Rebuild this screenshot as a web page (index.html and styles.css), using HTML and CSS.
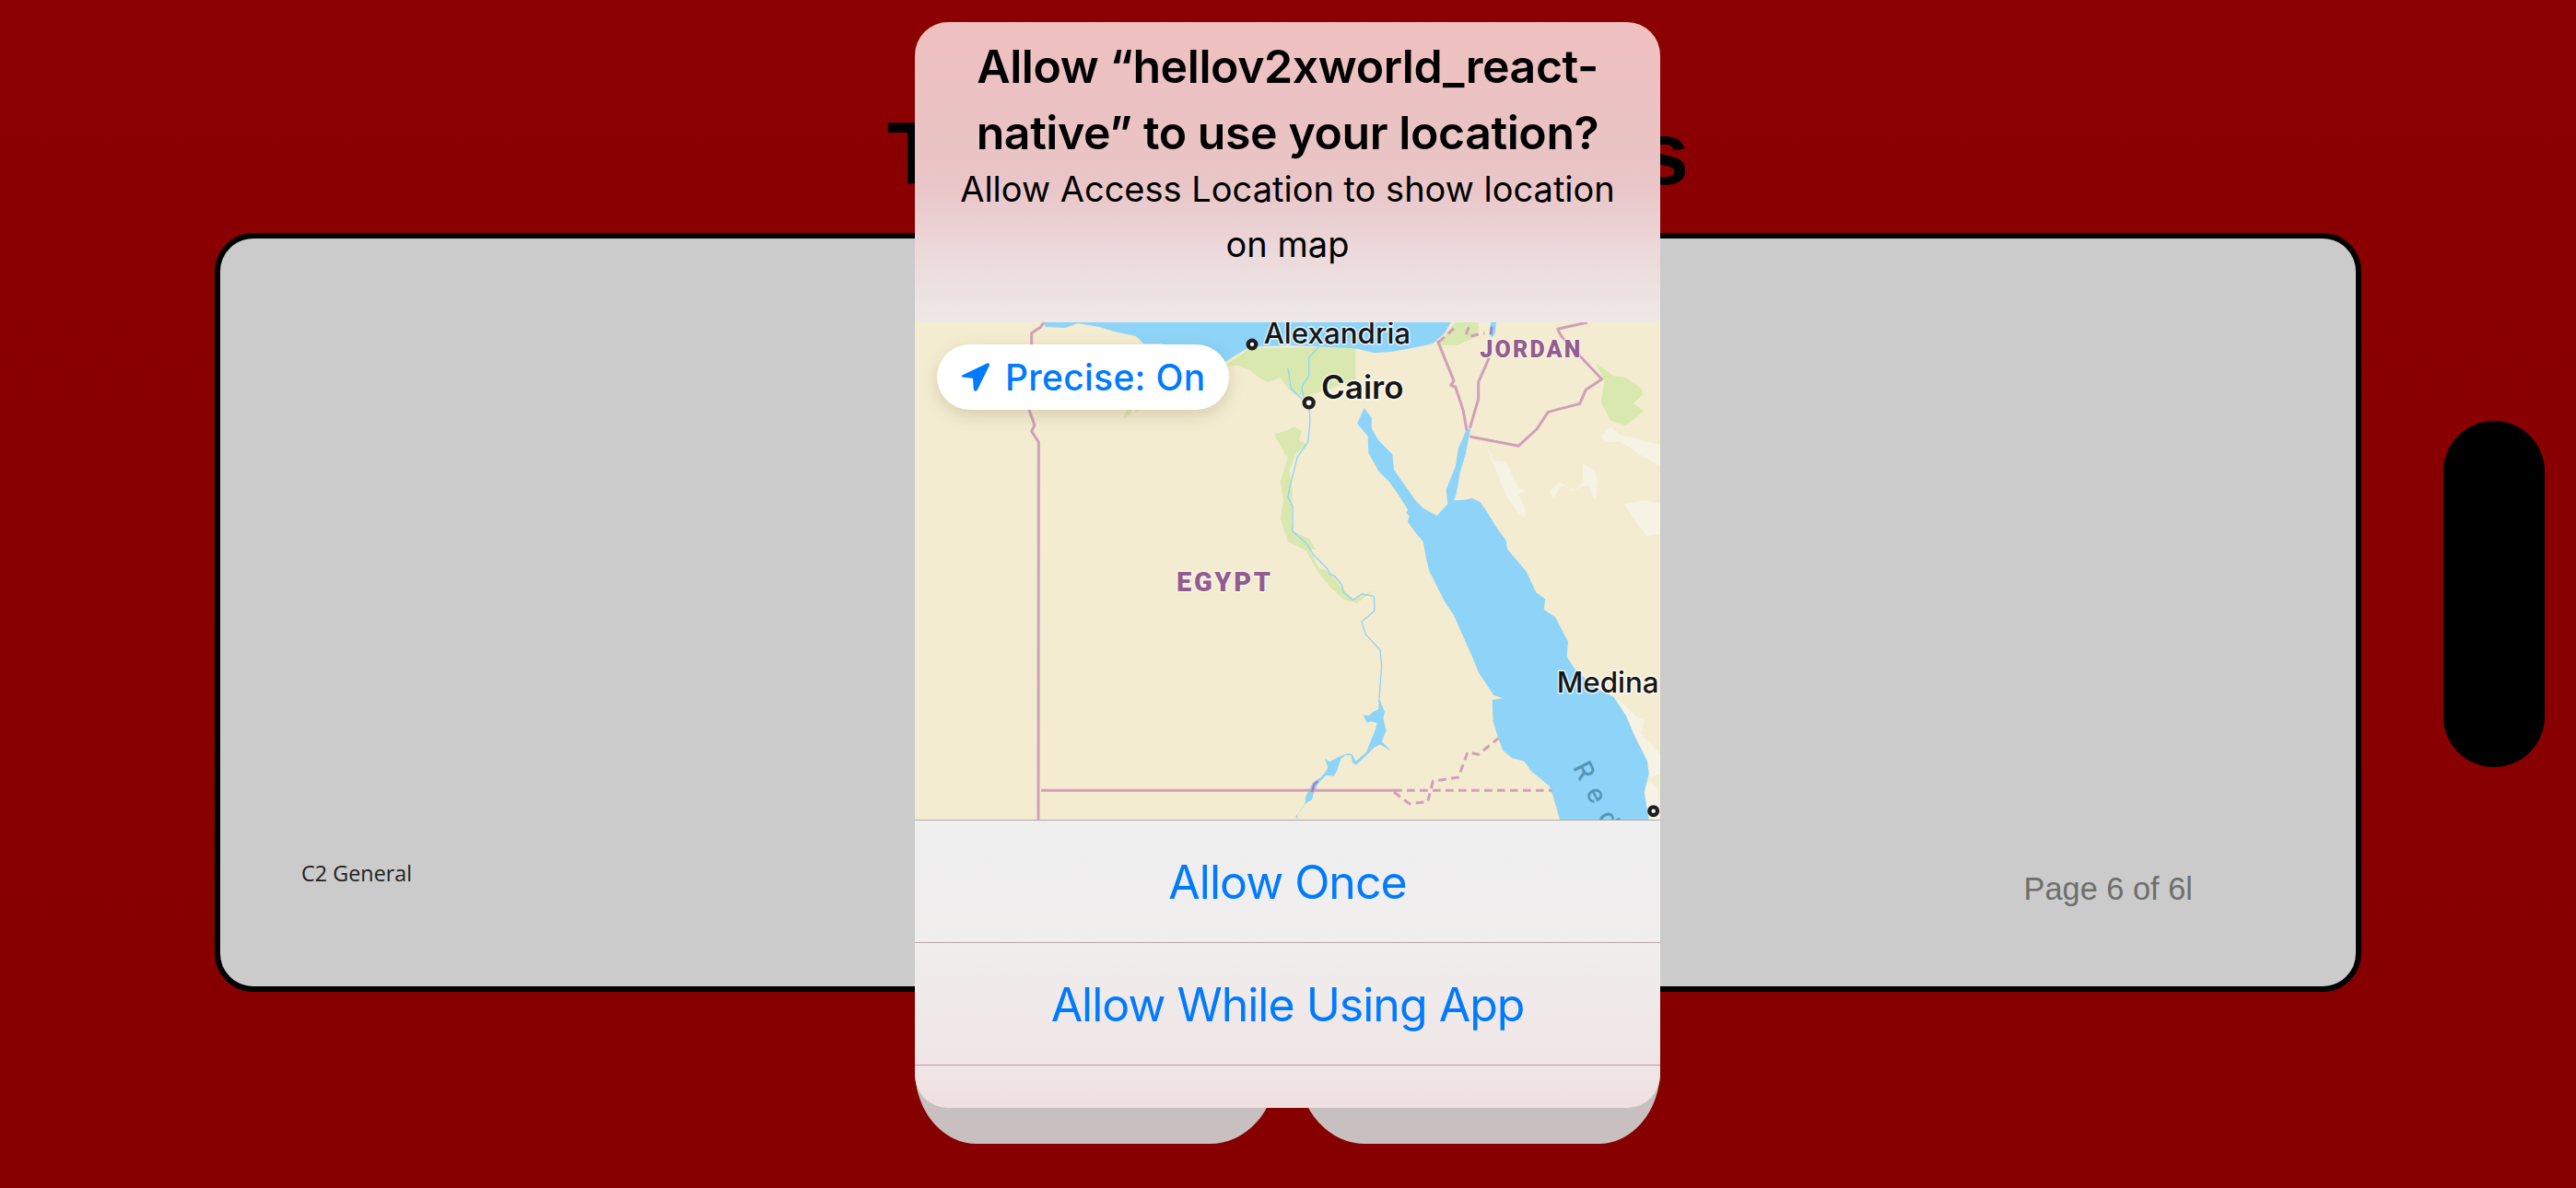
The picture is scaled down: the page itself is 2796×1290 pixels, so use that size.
FILE: index.html
```html
<!DOCTYPE html>
<html lang="en">
<head>
<meta charset="utf-8">
<title>Tracking Locations</title>
<link rel="stylesheet" href="styles.css">
</head>
<body>
<main class="page">
  <h1 class="heading">Tracking Locations</h1>
  <section class="card">
    <div class="card-foot">
      <span class="classification">C2 General</span>
      <span class="page-number">Page 6 of 6l</span>
    </div>
  </section>
</main>
<div class="side-pill"></div>

<div class="alert">
  <div class="alert-back"><span class="back-btn back-left"></span><span class="back-btn back-right"></span></div>
  <div class="alert-panel">
    <header class="alert-head">
      <h2 class="alert-title">Allow “hellov2xworld_react-native” to use your location?</h2>
      <p class="alert-message">Allow Access Location to show location on map</p>
    </header>
    <div class="map">
      <svg class="map-art" viewBox="0 0 2430 1620" aria-hidden="false">
        <!-- pale desert -->
        <g class="pale">
          <polygon points="1855,390 1885,450 1925,455 1965,540 1990,550 1965,560 1985,600 1990,640 1965,620 1930,575 1895,490"/>
          <polygon points="2235,370 2265,340 2295,365 2430,400 2430,470 2375,440 2300,390 2245,390"/>
          <polygon points="2065,550 2100,520 2145,550 2175,520 2175,460 2210,480 2225,515 2215,580 2190,530 2150,545 2105,535 2080,575"/>
          <polygon points="2310,590 2375,580 2430,590 2430,690 2385,695 2350,655"/>
          <polygon points="2275,1220 2315,1250 2355,1290 2375,1290 2365,1340 2430,1410 2430,1470 2395,1480 2380,1410 2345,1350 2305,1260"/>
          <polygon points="2390,1490 2420,1520 2430,1620 2400,1620 2370,1540"/>
        </g>
        <!-- vegetation -->
        <g class="green">
          <polygon points="1005,145 1090,85 1435,80 1435,195 1385,205 1325,225 1270,240 1235,235 1215,215 1190,180 1150,195 1120,180 1090,155 1050,140"/>
          <polygon points="1170,365 1215,350 1235,340 1260,355 1250,385 1275,395 1240,430 1220,480 1230,560 1225,640 1230,680 1285,705 1305,740 1285,740 1315,800 1345,810 1395,870 1430,905 1475,880 1490,875 1440,915 1400,905 1350,860 1310,810 1275,745 1215,715 1190,640 1200,580 1190,520 1215,440 1205,430 1195,410"/>
          <polygon points="2215,130 2275,175 2315,180 2365,215 2370,235 2340,265 2375,290 2315,335 2265,320 2235,260 2245,190"/>
          <polygon points="1705,75 1735,30 1760,0 1835,0 1835,45 1765,75"/>
          <polygon points="680,312 690,285 708,285 700,300"/>
          <polygon points="715,295 720,285 735,285"/>
        </g>
        <!-- water -->
        <polygon class="water" points="420,0 425,15 490,18 530,3 600,15 660,33 720,45 745,70 805,70 805,100 1000,135 1040,110 1090,80 1215,75 1435,85 1495,100 1555,95 1615,85 1685,70 1725,35 1745,0"/>
        <polygon class="water" points="1463,280 1487,310 1487,345 1510,385 1555,430 1560,480 1595,530 1630,580 1655,605 1700,630 1735,592 1730,545 1760,470 1770,410 1795,352 1810,345 1793,430 1775,490 1763,560 1755,580 1790,578 1815,573 1840,585 1865,620 1895,670 1925,710 1930,740 1960,775 1990,810 2023,880 2053,902 2048,935 2085,960 2127,1040 2123,1090 2150,1130 2215,1190 2275,1220 2315,1280 2345,1350 2385,1430 2390,1470 2375,1530 2390,1620 2100,1620 2077,1540 2065,1510 2005,1460 1985,1430 1945,1420 1915,1395 1900,1355 1883,1300 1880,1230 1915,1225 1885,1215 1835,1140 1815,1090 1755,955 1725,910 1675,810 1665,770 1655,715 1630,685 1605,650 1610,630 1600,622 1605,610 1580,570 1545,520 1510,485 1477,425 1475,370 1440,330"/>
        <polygon class="water" points="1512,1225 1530,1270 1525,1290 1535,1330 1520,1365 1553,1398 1515,1375 1495,1385 1473,1408 1437,1442 1425,1435 1420,1410 1403,1410 1387,1422 1375,1460 1365,1478 1340,1475 1315,1500 1300,1530 1293,1555 1275,1565 1245,1605 1247,1620 1240,1610 1270,1570 1273,1545 1290,1510 1295,1500 1325,1480 1340,1460 1345,1450 1335,1420 1350,1432 1380,1415 1410,1405 1425,1408 1435,1430 1470,1400 1480,1375 1500,1325 1505,1305 1485,1300 1473,1305 1460,1280 1480,1280 1490,1270 1510,1260 1510,1230"/>
        <polygon class="water" points="1875,0 1892,0 1890,35 1878,50 1872,40"/>
        <!-- rivers -->
        <g class="river">
          <polyline points="1283,262 1287,320 1280,390 1245,440 1220,540 1215,570 1230,600 1230,680 1275,720 1300,760 1345,805 1350,820 1365,825 1390,855 1395,878 1427,905 1455,885 1495,892 1497,940 1455,975 1467,1015 1515,1068 1520,1120 1512,1225"/>
          <polyline points="1215,150 1225,215 1260,250"/>
          <polyline points="1315,80 1283,115 1283,175 1260,210 1265,245"/>
        </g>
        <!-- borders -->
        <g class="border">
          <polyline points="420,0 410,15 380,35 380,75"/>
          <polyline points="372,285 390,335 380,355 403,390 402,1620"/>
          <polyline points="411,1525 1560,1525"/>
          <polyline points="1702,60 1755,190 1745,205 1760,210 1785,285 1797,352"/>
          <polyline points="1870,115 1835,195 1835,250 1807,345"/>
          <polyline points="1807,372 1965,403 2025,348 2062,292 2165,265 2185,220 2237,185 2175,120 2105,45 2093,22 2190,0"/>
        </g>
        <g class="border dashed">
          <polyline points="1560,1525 2075,1525"/>
          <polyline points="1560,1530 1610,1568 1670,1562 1687,1495 1770,1482 1800,1400 1835,1408 1900,1355"/>
          <polyline points="1705,65 1755,20"/>
          <polyline points="1795,40 1805,10"/>
          <polyline points="1810,45 1855,35"/>
          <polyline class="dark" points="1875,40 1880,5"/>
        </g>
        <polyline class="border-lake" points="1293,1530 1300,1505 1312,1495"/>
        <!-- labels -->
        <circle class="dot" cx="1098" cy="72" r="13"/>
        <circle class="dot" cx="1283" cy="262" r="15"/>
        <circle class="dot" cx="2405" cy="1592" r="13"/>
        <text class="city city-small" x="1136" y="70">Alexandria</text>
        <text class="city city-big" x="1323" y="248">Cairo</text>
        <text class="city city-small" x="2090" y="1205">Medina</text>
        <text class="region region-jordan" x="1840" y="113">JORDAN</text>
        <text class="region region-egypt" x="852" y="875">EGYPT</text>
        <text class="sea" transform="translate(2141,1449) rotate(63)">Red Sea</text>
      </svg>
      <div class="precise">
        <svg class="precise-icon" viewBox="148 133 92 92"><path d="M156 176 L231 140 Q235 139 234 143 L198 216 Q193 222 192 214 L190 180 Z"/></svg>
        <span>Precise: On</span>
      </div>
    </div>
    <div class="alert-actions">
      <button class="action">Allow Once</button>
      <button class="action">Allow While Using App</button>
      <div class="action-rest"></div>
    </div>
  </div>
</div>
</body>
</html>
```
FILE: styles.css
```css
* { box-sizing: border-box; }
html, body { margin: 0; padding: 0; }
body {
  width: 2796px;
  height: 1290px;
  overflow: hidden;
  position: relative;
  background: linear-gradient(#8b0000, #860000);
  font-family: "Inter", "Liberation Sans", sans-serif;
}
.page {
  display: flex;
  flex-direction: column;
  align-items: center;
  padding-top: 112px;
}
.heading {
  margin: 0 0 31px;
  font: 700 95.5px/110px "Liberation Sans", sans-serif;
  color: #000;
}
.card {
  width: 2330px;
  height: 824px;
  border: 6px solid #000;
  border-radius: 42px;
  background: #cbcbcb;
  display: flex;
  flex-direction: column;
  justify-content: flex-end;
}
.card-foot {
  display: flex;
  justify-content: space-between;
  align-items: flex-start;
  padding: 0 177px 86px 88px;
}
.classification {
  font: 400 23.4px/32px "Open Sans", sans-serif;
  color: #222;
}
.page-number {
  margin-top: 13px;
  font: 400 34.4px/40px "Liberation Sans", sans-serif;
  color: #6e6e6e;
}
.side-pill {
  position: absolute;
  left: 2652px;
  top: 457px;
  width: 110px;
  height: 376px;
  border-radius: 55px;
  background: #000;
}
.alert {
  position: absolute;
  left: 993px;
  top: 24px;
  width: 809px;
}
.alert-back {
  position: absolute;
  left: 0;
  right: 0;
  bottom: -39px;
  height: 200px;
  display: flex;
  justify-content: space-between;
}
.back-btn {
  width: 392px;
  height: 100%;
  background: #c8c0c0;
}
.back-left { border-radius: 0 0 72px 67px / 0 0 80px 80px; }
.back-right { border-radius: 0 0 67px 72px / 0 0 80px 80px; }
.alert-panel {
  position: relative;
  display: flex;
  flex-direction: column;
  border-radius: 36px;
  overflow: hidden;
}
.alert-head {
  height: 326px;
  padding: 12px 40px 0;
  text-align: center;
  background: linear-gradient(#f0c0c0 0, #ebc2c2 100px, #eac6c8 180px, #ecd8da 246px, #eee8e8 326px);
}
.alert-title {
  margin: 0 0 -5px;
  font-size: 50px;
  line-height: 72px;
  font-weight: 600;
  letter-spacing: -0.42px;
  color: #000;
}
.alert-message {
  margin: 0;
  font-size: 38px;
  line-height: 60px;
  font-weight: 400;
  color: #000;
}
.map {
  position: relative;
  height: 540px;
  background: #f4ecd1;
  overflow: hidden;
}
.map-art {
  display: block;
  width: 810px;
  height: 540px;
}
.pale polygon { fill: #f6f2e4; }
.green polygon { fill: #d9e8ae; }
.water { fill: #8dd4f8; }
.river polyline {
  fill: none;
  stroke: #8dd4f8;
  stroke-width: 4;
  stroke-linejoin: round;
}
.border polyline {
  fill: none;
  stroke: #d0a0ba;
  stroke-width: 9;
  stroke-linejoin: round;
}
.border.dashed polyline { stroke-dasharray: 26 16; }
.border.dashed .dark { stroke: #9a86d0; }
.border-lake {
  fill: none;
  stroke: #b07ab0;
  stroke-width: 7;
}
.dot {
  fill: #fff;
  stroke: #1f1f1f;
  stroke-width: 13;
}
.city {
  font-family: "Inter", sans-serif;
  font-weight: 500;
  fill: #161616;
  stroke: rgba(255, 255, 255, 0.75);
  stroke-width: 9;
  paint-order: stroke;
  stroke-linejoin: round;
}
.city-small { font-size: 94px; }
.city-big { font-size: 105px; font-weight: 600; }
.region {
  font-family: "Roboto", sans-serif;
  font-weight: 900;
  fill: #925c90;
  stroke: rgba(255, 255, 255, 0.6);
  stroke-width: 7;
  paint-order: stroke;
  stroke-linejoin: round;
}
.region-jordan { font-size: 75px; letter-spacing: 6.5px; }
.region-egypt { font-size: 87px; letter-spacing: 8px; }
.sea {
  font-family: "Inter", sans-serif;
  font-size: 84px;
  font-weight: 500;
  letter-spacing: 38px;
  fill: #5596b6;
}
.precise {
  position: absolute;
  left: 24px;
  top: 24px;
  height: 71px;
  padding: 0 26px 0 25px;
  display: flex;
  align-items: center;
  gap: 16px;
  background: #fff;
  border-radius: 36px;
  box-shadow: 0 6px 18px rgba(90, 70, 30, 0.18);
  font-size: 39px;
  font-weight: 500;
  letter-spacing: 0.3px;
  color: #007aff;
}
.precise-icon {
  width: 33px;
  height: 33px;
  display: block;
  fill: #007aff;
  stroke: #007aff;
  stroke-width: 6;
  stroke-linejoin: round;
}
.alert-actions {
  display: flex;
  flex-direction: column;
  background: linear-gradient(#efefef, #f0eded 45%, #f0e5e5 85%, #efe0e0);
}
.action {
  display: block;
  width: 100%;
  height: 133px;
  padding: 2px 0 0;
  border: 0;
  border-top: 1.5px solid #b5aaaa;
  background: transparent;
  font-family: inherit;
  font-size: 50px;
  font-weight: 400;
  letter-spacing: -1px;
  color: #007aff;
}
.action-rest {
  height: 47px;
  border-top: 1.5px solid #b89d9d;
}
```
